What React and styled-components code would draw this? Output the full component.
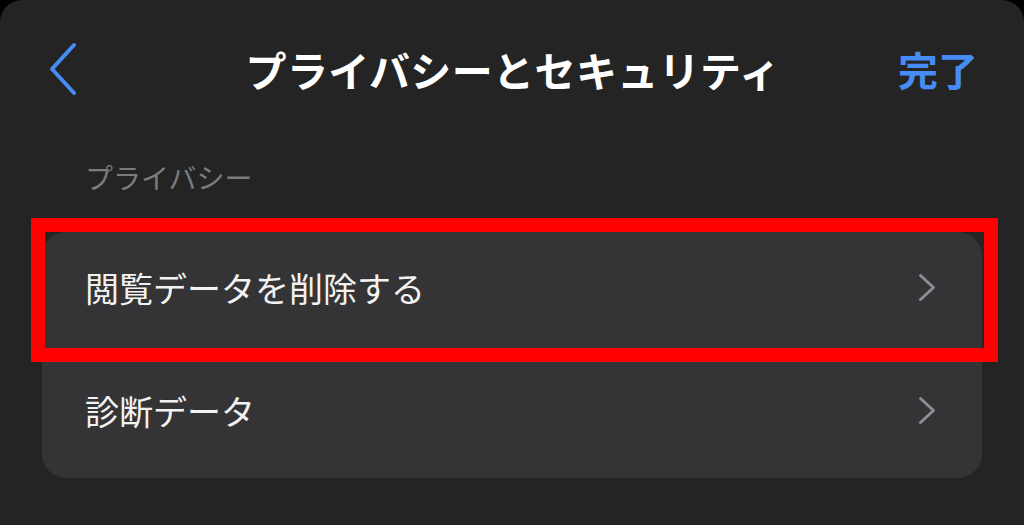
import React from "react";
import styled, { createGlobalStyle } from "styled-components";

const GlobalStyle = createGlobalStyle`
  html, body {
    margin: 0;
    padding: 0;
    background: #000;
  }
  body {
    font-family: "Noto Sans CJK JP", "Noto Sans", sans-serif;
    -webkit-font-smoothing: antialiased;
  }
`;

const Sheet = styled.div`
  box-sizing: border-box;
  height: 525px;
  background: #242424;
  border-radius: 22px 22px 0 0;
  padding: 0 42px;
  overflow: hidden;
`;

const NavBar = styled.div`
  display: grid;
  grid-template-columns: 120px 1fr 120px;
  align-items: center;
  height: 138px;
  margin: 0 -42px;
  padding: 0 46px 0 48px;
`;

const BackButton = styled.button`
  display: flex;
  align-items: center;
  padding: 0;
  border: none;
  background: none;
  color: #458cf5;
  cursor: pointer;
`;

const Title = styled.h1`
  margin: 0;
  text-align: center;
  font-size: 41px;
  font-weight: 700;
  color: #fff;
  letter-spacing: 0.4px;
`;

const DoneButton = styled.button`
  justify-self: end;
  padding: 0;
  border: none;
  background: none;
  font-family: inherit;
  font-size: 40px;
  font-weight: 700;
  color: #458cf5;
  cursor: pointer;
`;

const SectionLabel = styled.div`
  margin-top: 19px;
  padding-left: 43px;
  font-size: 28px;
  line-height: 40px;
  color: #7b7b7e;
`;

const Card = styled.div`
  position: relative;
  margin-top: 35px;
  background: #343436;
  border-radius: 24px;
`;

const Row = styled.div`
  display: flex;
  align-items: center;
  justify-content: space-between;
  height: ${(p) => p.$height}px;
  padding: 0 46px 0 43px;
  font-size: 34px;
  color: #f2f2f2;
`;

const Highlight = styled.div`
  position: absolute;
  top: -14px;
  left: -11px;
  width: 967px;
  height: 144px;
  box-sizing: border-box;
  border: 14px solid #ff0000;
  pointer-events: none;
`;

const BackChevron = () => (
  <svg width="30" height="54" viewBox="0 0 30 54" fill="none">
    <path
      d="M26 3 L4 27 L26 51"
      stroke="currentColor"
      strokeWidth="4"
      strokeLinecap="round"
      strokeLinejoin="round"
    />
  </svg>
);

const RowChevron = () => (
  <svg width="18" height="29" viewBox="0 0 18 29" fill="none">
    <path
      d="M2.5 2.5 L15.5 14.5 L2.5 26.5"
      stroke="#8d8d92"
      strokeWidth="3"
      strokeLinecap="round"
      strokeLinejoin="round"
    />
  </svg>
);

const rows = [
  { label: "閲覧データを削除する", height: 110 },
  { label: "診断データ", height: 136 },
];

const App = () => {
  return (
    <>
      <GlobalStyle />
      <Sheet>
        <NavBar>
          <BackButton aria-label="戻る">
            <BackChevron />
          </BackButton>
          <Title>プライバシーとセキュリティ</Title>
          <DoneButton>完了</DoneButton>
        </NavBar>
        <SectionLabel>プライバシー</SectionLabel>
        <Card>
          {rows.map((row) => (
            <Row key={row.label} $height={row.height}>
              <span>{row.label}</span>
              <RowChevron />
            </Row>
          ))}
          <Highlight />
        </Card>
      </Sheet>
    </>
  );
};

export default App;
